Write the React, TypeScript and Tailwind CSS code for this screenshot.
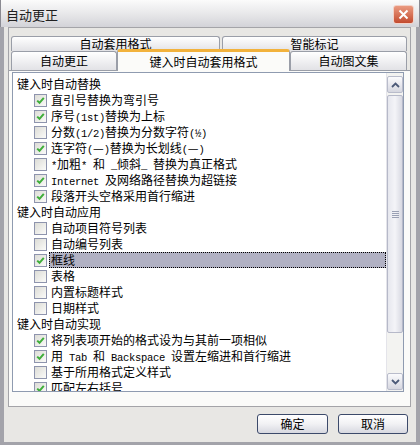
import React from 'react';

type Row =
  | { kind: 'head'; text: string }
  | { kind: 'check'; checked: boolean; label: React.ReactNode; selected?: boolean };

// latin part in the half-width bitmap look
const L: React.FC<{ children: React.ReactNode }> = ({ children }) => (
  <span className="font-['Liberation_Mono',monospace] text-[10.5px] tracking-[-0.3px] whitespace-pre">{children}</span>
);

const rows: Row[] = [
  { kind: 'head', text: '键入时自动替换' },
  { kind: 'check', checked: true, label: <>直引号替换为弯引号</> },
  { kind: 'check', checked: true, label: <>序号<L>(1st)</L>替换为上标</> },
  { kind: 'check', checked: false, label: <>分数<L>(1/2)</L>替换为分数字符<L>(½)</L></> },
  { kind: 'check', checked: true, label: <>连字符<L>(</L>—<L>)</L>替换为长划线<L>(</L>—<L>)</L></> },
  { kind: 'check', checked: false, label: <><L>*</L>加粗<L>* </L>和<L> _</L>倾斜<L>_ </L>替换为真正格式</> },
  { kind: 'check', checked: true, label: <><L>Internet </L>及网络路径替换为超链接</> },
  { kind: 'check', checked: true, label: <>段落开头空格采用首行缩进</> },
  { kind: 'head', text: '键入时自动应用' },
  { kind: 'check', checked: false, label: <>自动项目符号列表</> },
  { kind: 'check', checked: false, label: <>自动编号列表</> },
  { kind: 'check', checked: true, label: <>框线</>, selected: true },
  { kind: 'check', checked: false, label: <>表格</> },
  { kind: 'check', checked: false, label: <>内置标题样式</> },
  { kind: 'check', checked: false, label: <>日期样式</> },
  { kind: 'head', text: '键入时自动实现' },
  { kind: 'check', checked: true, label: <>将列表项开始的格式设为与其前一项相似</> },
  { kind: 'check', checked: true, label: <>用<L> Tab </L>和<L> Backspace </L>设置左缩进和首行缩进</> },
  { kind: 'check', checked: false, label: <>基于所用格式定义样式</> },
  { kind: 'check', checked: true, label: <>匹配左右括号</> },
];

const CheckBox: React.FC<{ checked: boolean }> = ({ checked }) => (
  <div className="w-[13px] h-[13px] shrink-0 border border-[#8e94ad] bg-gradient-to-br from-[#dcdcd6] to-[#fbfbf9] flex items-center justify-center">
    {checked && (
      <svg width="9" height="9" viewBox="0 0 9 9">
        <path d="M1.2 4.6 L3.5 6.8 L7.8 1.8" fill="none" stroke="#3fae3a" strokeWidth="2" />
      </svg>
    )}
  </div>
);

const Arrow: React.FC<{ up?: boolean }> = ({ up }) => (
  <svg width="9" height="6" viewBox="0 0 9 6">
    <path d={up ? 'M1 5 L4.5 1.5 L8 5' : 'M1 1 L4.5 4.5 L8 1'} fill="none" stroke="#4c5a78" strokeWidth="1.8" />
  </svg>
);

const ScrollButton: React.FC<{ up?: boolean }> = ({ up }) => (
  <div className="h-[17px] w-[16px] rounded-[2px] border border-[#b9bccb] bg-gradient-to-b from-[#fbfbfd] to-[#d6d7e0] flex items-center justify-center">
    <Arrow up={up} />
  </div>
);

const Tab: React.FC<{ label: string; className: string }> = ({ label, className }) => (
  <div
    className={`rounded-t-[3px] border-x border-t border-[#9a9ea8] bg-gradient-to-b from-white to-[#e2e2e6] flex items-center justify-center leading-none ${className}`}
  >
    {label}
  </div>
);

const Btn: React.FC<{ label: string; w: string }> = ({ label, w }) => (
  <button
    className={`${w} h-[20px] rounded-[3px] border border-[#3c4a6a] bg-gradient-to-b from-white via-[#f1f1f4] to-[#d7d8e0] text-[12px] leading-none flex items-center justify-center`}
  >
    {label}
  </button>
);

export default function App() {
  return (
    <div className="w-[420px] h-[445px] flex flex-col overflow-hidden text-[12px] text-black font-['Noto_Sans_CJK_SC',sans-serif]">
      {/* title bar */}
      <div className="h-[27px] shrink-0 flex items-center justify-between pl-[5px] pr-[5px] border-x border-[#8a8a92] bg-gradient-to-b from-[#fbfbfb] via-[#e8e8ea] to-[#d3d3d8]">
        <span className="text-[13px] leading-[16px] text-[#202020] mt-[3px]">自动更正</span>
        <div className="w-[21px] h-[19px] mt-[2px] rounded-[3px] border border-[#f3d2c8] bg-gradient-to-b from-[#ea9a80] to-[#c24a2e] flex items-center justify-center">
          <svg width="11" height="11" viewBox="0 0 11 11">
            <path d="M1.5 1.5 L9.5 9.5 M9.5 1.5 L1.5 9.5" stroke="white" strokeWidth="2" />
          </svg>
        </div>
      </div>

      {/* body */}
      <div className="flex-1 flex flex-col bg-[#e8e7e4] border-x-[4px] border-b-[3px] border-[#a3a3aa]">
        <div className="ml-[4px] mr-[5px] h-[380px] shrink-0 flex flex-col border border-[#a4a4a8]">
          {/* tabs */}
          <div className="pt-[8px] pl-[2px] pr-[3px] flex flex-col">
            <div className="flex h-[15px] gap-[2px]">
              <Tab label="自动套用格式" className="w-[209px] h-[15px]" />
              <Tab label="智能标记" className="w-[185px] h-[15px]" />
            </div>
            <div className="flex h-[19px] items-end">
              <Tab label="自动更正" className="w-[106px] h-[19px]" />
              <div className="w-[173px] h-[22px] -mb-[1px] relative z-10 rounded-t-[3px] border-x border-[#9a9ea8] border-t-[3px] border-t-[#f2b23c] bg-[#fbfbf9] flex items-center justify-center leading-none">
                键入时自动套用格式
              </div>
              <Tab label="自动图文集" className="w-[117px] h-[19px]" />
            </div>
          </div>

          {/* tab page */}
          <div className="flex-1 bg-[#fbfbf9] border-t border-[#9a9ea8] pt-[1px] pl-[3px]">
            <div className="w-[392px] h-[320px] border border-[#8f9bb0] bg-white flex overflow-hidden">
              <div className="flex-1 pt-[3px] overflow-hidden">
                {rows.map((r, i) =>
                  r.kind === 'head' ? (
                    <div key={i} className="h-[16px] leading-[16px] pl-[4px] whitespace-nowrap">
                      {r.text}
                    </div>
                  ) : (
                    <div key={i} className="h-[16px] flex items-center pl-[21px]">
                      <CheckBox checked={r.checked} />
                      <div
                        className={`ml-[2px] px-[2px] flex-1 h-[16px] leading-[15px] whitespace-nowrap ${
                          r.selected ? 'bg-[#b1b1c3] outline-1 outline-dotted outline-black -outline-offset-1' : ''
                        }`}
                      >
                        {r.label}
                      </div>
                    </div>
                  )
                )}
              </div>

              {/* scrollbar */}
              <div className="w-[17px] shrink-0 flex flex-col pt-[3px] pb-[1px] bg-[#f3f3f1] border-l border-[#e4e4ea]">
                <ScrollButton up />
                <div className="mt-[2px] h-[238px] w-[16px] rounded-[2px] border border-[#b6b9c9] bg-gradient-to-r from-[#e6e7ee] via-[#f4f4f8] to-[#d8d9e2] flex flex-col items-center justify-center gap-[1px]">
                  <div className="w-[7px] h-[1px] bg-[#9aa0b4]" />
                  <div className="w-[7px] h-[1px] bg-[#9aa0b4]" />
                  <div className="w-[7px] h-[1px] bg-[#9aa0b4]" />
                  <div className="w-[7px] h-[1px] bg-[#9aa0b4]" />
                </div>
                <div className="flex-1" />
                <ScrollButton />
              </div>
            </div>
          </div>
        </div>

        {/* buttons */}
        <div className="mt-[7px] pr-[8px] flex justify-end gap-[10px]">
          <Btn label="确定" w="w-[71px]" />
          <Btn label="取消" w="w-[70px]" />
        </div>
      </div>
    </div>
  );
}
